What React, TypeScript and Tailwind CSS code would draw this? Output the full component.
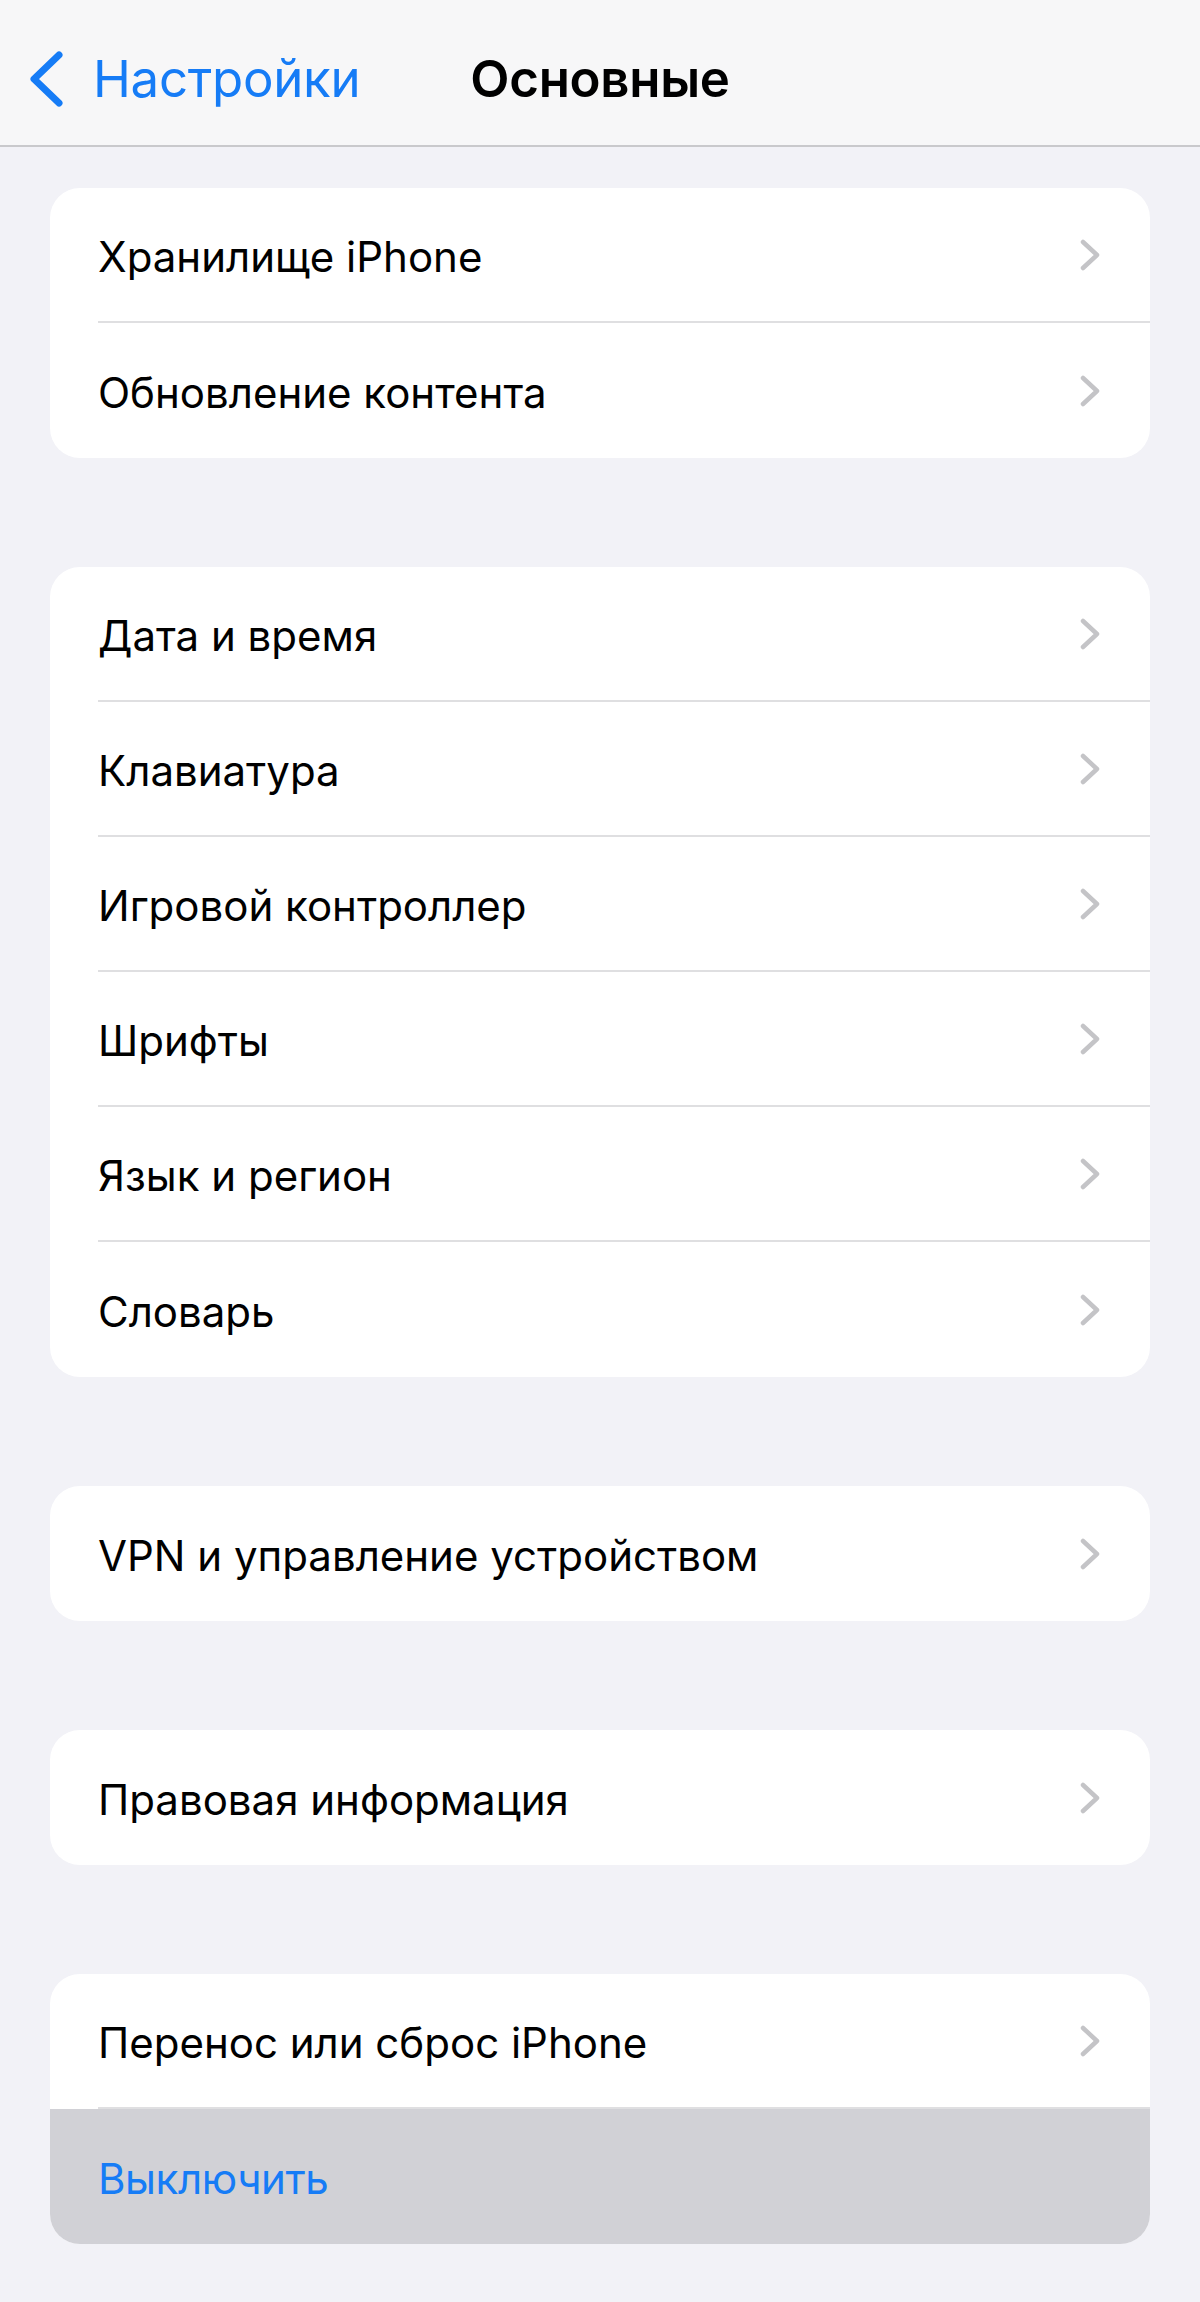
type Row = { label: string; action?: boolean };

const groups: Row[][] = [
  [{ label: 'Хранилище iPhone' }, { label: 'Обновление контента' }],
  [
    { label: 'Дата и время' },
    { label: 'Клавиатура' },
    { label: 'Игровой контроллер' },
    { label: 'Шрифты' },
    { label: 'Язык и регион' },
    { label: 'Словарь' },
  ],
  [{ label: 'VPN и управление устройством' }],
  [{ label: 'Правовая информация' }],
  [{ label: 'Перенос или сброс iPhone' }, { label: 'Выключить', action: true }],
];

function BackChevron() {
  return (
    <svg width="36" height="56" viewBox="0 0 36 56" fill="none" className="shrink-0">
      <path
        d="M31 4 L6 28 L31 52"
        stroke="#167cf6"
        strokeWidth="7"
        strokeLinecap="round"
        strokeLinejoin="round"
      />
    </svg>
  );
}

function RowChevron() {
  return (
    <svg width="21" height="32" viewBox="0 0 21 32" fill="none" className="shrink-0">
      <path
        d="M3 3 L17 16 L3 29"
        stroke="#c4c4c7"
        strokeWidth="4.5"
        strokeLinecap="round"
        strokeLinejoin="round"
      />
    </svg>
  );
}

export default function App() {
  return (
    <div
      className="min-h-[2302px] w-[1200px] bg-[#f2f2f7] text-black"
      style={{ fontFamily: 'Inter, "Noto Sans", sans-serif' }}
    >
      <header className="grid h-[147px] grid-cols-[1fr_auto_1fr] items-center border-b-2 border-[#c9c9cc] bg-[#f7f7f8] pt-3">
        <div className="flex items-center gap-[29px] pl-[28px]">
          <BackChevron />
          <span className="text-[51px] leading-none tracking-[-0.3px] text-[#167cf6]">Настройки</span>
        </div>
        <h1 className="text-[51px] font-semibold leading-none tracking-[-0.3px]">Основные</h1>
        <div />
      </header>

      <main className="flex flex-col gap-[109px] px-[50px] pt-[41px]">
        {groups.map((rows, gi) => (
          <section key={gi} className="overflow-hidden rounded-[30px] bg-white">
            {rows.map((row, ri) => {
              const last = ri === rows.length - 1;
              return (
                <div
                  key={row.label}
                  className={row.action ? 'bg-[#d1d1d6] pl-[48px]' : 'pl-[48px]'}
                >
                  <div
                    className={
                      last
                        ? 'flex h-[135px] items-center justify-between pr-[49px]'
                        : 'flex h-[135px] items-center justify-between border-b-2 border-[#dfdfe1] pr-[49px]'
                    }
                  >
                    <span
                      className={
                        row.action
                          ? 'pt-[4px] text-[42px] leading-none tracking-[-0.4px] text-[#167cf6]'
                          : 'pt-[4px] text-[42px] leading-none'
                      }
                    >
                      {row.label}
                    </span>
                    {!row.action && <RowChevron />}
                  </div>
                </div>
              );
            })}
          </section>
        ))}
      </main>
    </div>
  );
}
